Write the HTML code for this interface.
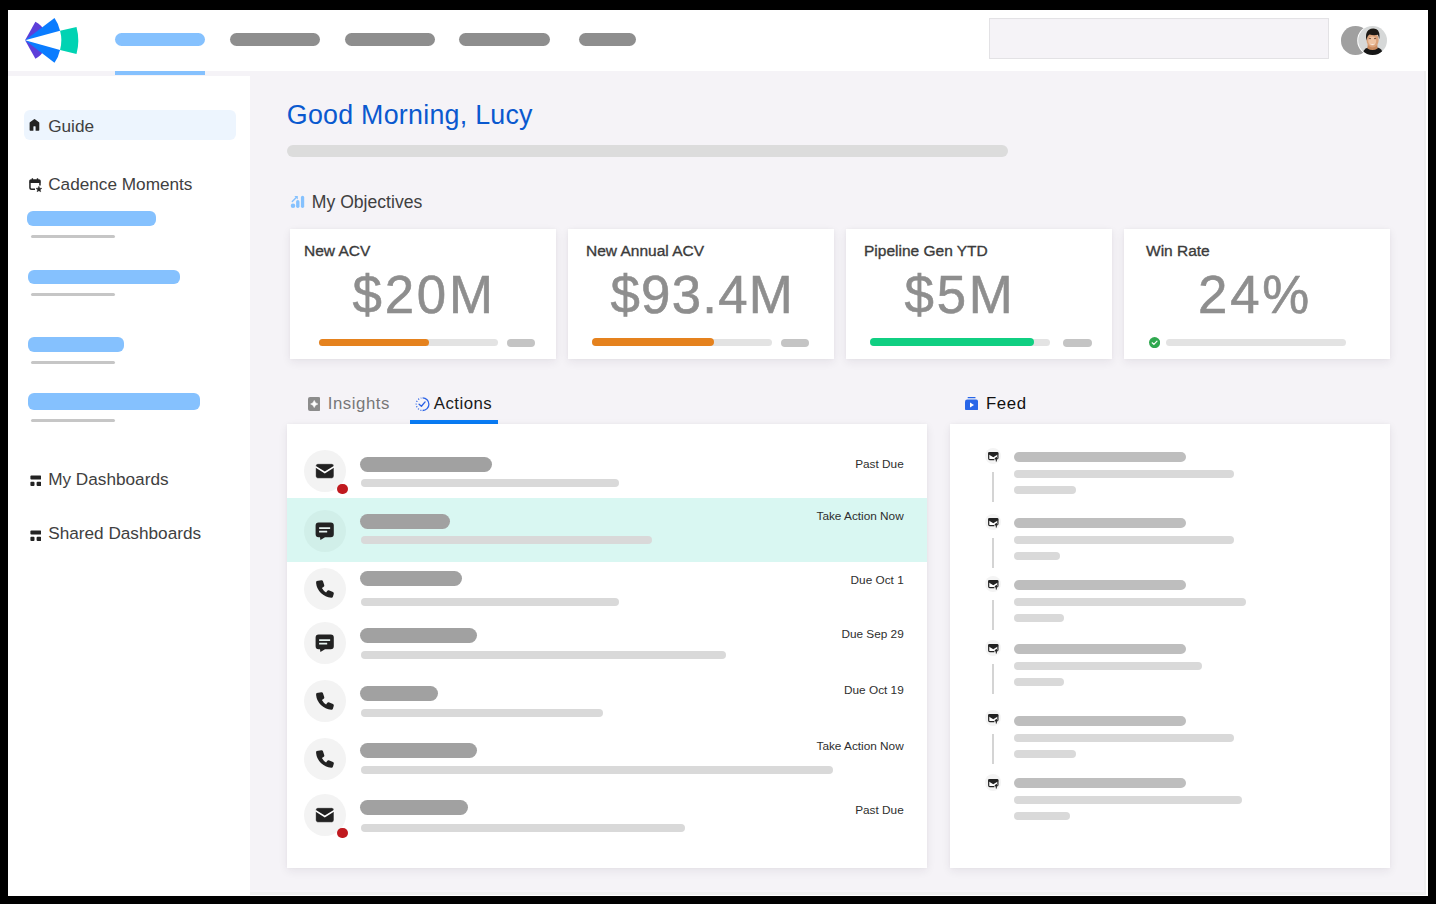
<!DOCTYPE html>
<html><head><meta charset="utf-8">
<style>
html,body{margin:0;padding:0}
body{width:1436px;height:904px;background:#000;position:relative;overflow:hidden;font-family:"Liberation Sans",sans-serif}
.a{position:absolute}
.t{position:absolute;line-height:1;white-space:nowrap;font-family:"Liberation Sans",sans-serif}
.pill{position:absolute;border-radius:8px}
.card{position:absolute;background:#fff;box-shadow:0 3px 9px rgba(40,30,60,0.075),0 0 3px rgba(40,30,60,0.03)}
.bl{background:#85c1fe}
.n{top:268.9px;font-size:52.8px;letter-spacing:2.8px;color:#8e8e8e;-webkit-text-stroke:0.6px #8e8e8e}
.ct{top:243px;font-size:15.5px;color:#3b3b3b;-webkit-text-stroke:0.35px #3b3b3b}
.gr{background:#8e8e8e}
.tb{position:absolute;background:#a1a1a1;height:15px;border-radius:7.5px;left:359.6px}
.sb{position:absolute;background:#d9d9d9;height:8px;border-radius:4px;left:361px}
.ic{position:absolute;left:303.9px;width:42px;height:42px;border-radius:50%;background:#f3f3f3}
.dt{position:absolute;right:532.3px;margin-top:0.5px;font-size:11.8px;color:#2e2e2e;line-height:1;white-space:nowrap;text-align:right}
.fi{position:absolute;left:984.5px;width:16.4px;height:16.4px;border-radius:50%;background:#f4f4f4}
.fl{position:absolute;left:992.3px;width:2px;background:#d4d4d4}
.f1{position:absolute;left:1014.2px;height:9.8px;width:171.6px;border-radius:5px;background:#bebebe}
.f2{position:absolute;left:1014.2px;height:8px;border-radius:4px;background:#d9d9d9}
.f3{position:absolute;left:1014.2px;height:7.8px;border-radius:4px;background:#d9d9d9}
</style></head>
<body>
<svg width="0" height="0" style="position:absolute">
<defs>
<g id="i-mail">
  <rect x="2.6" y="4.7" width="18.4" height="14.7" rx="2.3" fill="#222" stroke="#fff" stroke-width="0.6"/>
  <path d="M2.4 7.6 L11.8 13.4 L21.2 7.6" stroke="#fff" stroke-width="1.7" fill="none" stroke-linejoin="miter"/>
</g>
<g id="i-chat">
  <path d="M5.6 3.5 H17.8 Q20.8 3.5 20.8 6.5 V15.2 Q20.8 18.2 17.8 18.2 H12 L7.4 20.9 L7 18.2 H5.6 Q2.6 18.2 2.6 15.2 V6.5 Q2.6 3.5 5.6 3.5 Z" fill="#222"/>
  <rect x="6.1" y="8.2" width="11.1" height="1.7" rx="0.3" fill="#e8f4f1"/>
  <rect x="6.1" y="11.8" width="8.1" height="1.7" rx="0.3" fill="#e8f4f1"/>
</g>
<g id="i-phone">
  <path d="M3.7 4.1 L8.4 3.2 Q9.5 3.1 9.9 4.1 L11.3 8.3 Q11.5 9.4 10.4 10.1 L8.9 11.1 Q10.4 14 13.1 15.5 L14.1 14.1 Q14.8 13 15.7 13.2 L20 15.1 Q21 15.6 20.8 16.7 L19.9 19.8 Q19.5 20.8 18.3 20.7 Q12.2 20.1 7.9 15.9 Q3.6 11.7 3.1 6 Q3 4.4 3.7 4.1 Z" fill="#222"/>
</g>
<g id="i-fmail">
  <rect x="1.7" y="2.5" width="9.2" height="7.2" rx="1.1" fill="#fff" stroke="#222" stroke-width="1.2"/>
  <path d="M1.4 2.3 H11.2 V4.3 L6.3 7.3 L1.4 4.3 Z" fill="#222"/>
  <path d="M7.4 12 V8.7 L9.3 6.7 L11.9 8.9 V12 Z" fill="#f7f7f7"/>
  <path d="M9.3 11.6 V7.7 M7.9 9.2 L9.3 7.6 L10.7 9.2" stroke="#222" stroke-width="1.1" fill="none"/>
</g>
</defs></svg>
<!-- app frame -->
<div class="a" style="left:8px;top:10px;width:1420px;height:886px;background:#fff"></div>
<div class="a" style="left:8px;top:10px;width:1418.2px;height:884.9px;background:#efeff0"></div>
<div class="a" style="left:8px;top:10px;width:1415.8px;height:881.9px;background:#f5f3f7"></div>
<!-- header -->
<div class="a" style="left:8px;top:10px;width:1420px;height:61px;background:#fff"></div>
<svg class="a" style="left:0;top:0" width="100" height="80" viewBox="0 0 100 80">
  <path d="M25.08 40.3 L35.4 21.8 A21.2 21.2 0 0 1 44.5 31 Z" fill="#5d3fd9"/>
  <path d="M25.08 40.3 L44.5 49.6 A21.2 21.2 0 0 1 35.4 58.8 Z" fill="#5d3fd9"/>
  <path d="M25.08 40.3 L54.5 18.1 A36.6 36.6 0 0 1 60.05 30.7 Z" fill="#0a7cff"/>
  <path d="M25.08 40.3 L60.05 49.9 A36.6 36.6 0 0 1 54.5 62.8 Z" fill="#0a7cff"/>
  <path d="M60.05 30.8 L76.5 26.9 A53.1 53.1 0 0 1 76.5 54.1 L60.05 49.9 A36.3 36.3 0 0 0 60.05 30.8 Z" fill="#00d3b3"/>
</svg>
<div class="pill bl" style="left:115px;top:33.4px;width:90px;height:12.5px"></div>
<div class="pill gr" style="left:230px;top:33.4px;width:90px;height:12.5px"></div>
<div class="pill gr" style="left:344.5px;top:33.4px;width:90px;height:12.5px"></div>
<div class="pill gr" style="left:459.3px;top:33.4px;width:90.5px;height:12.5px"></div>
<div class="pill gr" style="left:578.5px;top:33.4px;width:57.5px;height:12.5px"></div>
<div class="a bl" style="left:115px;top:71px;width:90px;height:4.4px"></div>
<div class="a" style="left:989px;top:18.2px;width:338px;height:38.6px;background:#f5f3f7;border:1px solid #e3e2e5"></div>
<div class="a" style="left:1341.4px;top:26.2px;width:28.7px;height:28.7px;border-radius:50%;background:#a0a0a0"></div>
<svg class="a" style="left:1356.8px;top:25px" width="31" height="31" viewBox="0 0 31 31">
  <circle cx="15.5" cy="15.5" r="15.3" fill="#fff"/>
  <circle cx="15.6" cy="15.5" r="14.4" fill="#d6d8d8"/>
  <clipPath id="av"><circle cx="15.6" cy="15.5" r="14.4"/></clipPath>
  <g clip-path="url(#av)">
    <path d="M5.5 31 L6.5 26 Q8 23 11.5 22.6 L19.5 22.6 Q23.5 23 25 26 L26 31 Z" fill="#161616"/>
    <path d="M10.8 19 L20.2 19 L20.6 23.4 Q15.5 26.5 10.4 23.4 Z" fill="#c98a5e"/>
    <ellipse cx="15.6" cy="15" rx="6.1" ry="7.4" fill="#dba27a"/>
    <ellipse cx="15.2" cy="16" rx="4" ry="4.6" fill="#eec3a2"/>
    <path d="M9.3 15.5 Q8 7.8 11.5 5 Q15.5 2.6 19.5 4.2 Q23.2 6 22.3 14.2 Q21.6 10.5 20.8 9.8 Q17 10.8 12.6 9.6 Q10.4 10.8 9.3 15.5 Z" fill="#1d1915"/>
    <path d="M12.6 18.6 Q15.4 21.2 18.4 18.6 Q15.5 19.6 12.6 18.6 Z" fill="#fbeee6"/>
    <path d="M11.9 13.6 H14 M17 13.6 H19.1" stroke="#5a3a28" stroke-width="0.8"/>
  </g>
</svg>

<!-- sidebar -->
<div class="a" style="left:8px;top:76px;width:242px;height:820px;background:#fff"></div>
<div class="a" style="left:24.2px;top:110px;width:211.6px;height:29.6px;border-radius:6px;background:#edf5fe"></div>
<svg class="a" style="left:28.9px;top:119px" width="12" height="12.2" viewBox="0 0 12 12.2">
  <path d="M5.5 0.1 Q5.9 0.1 6.3 0.5 L10 3.3 Q10.3 3.6 10.3 4.1 L10.3 11.1 Q10.3 11.8 9.6 11.8 L6.6 11.8 L6.6 7.8 Q6.6 7.3 6.1 7.3 L4.9 7.3 Q4.4 7.3 4.4 7.8 L4.4 11.8 L1.3 11.8 Q0.6 11.8 0.6 11.1 L0.6 4.1 Q0.6 3.6 0.9 3.3 L4.7 0.5 Q5.1 0.1 5.5 0.1 Z" fill="#232323"/>
</svg>
<div class="t" style="left:48.2px;top:117.8px;font-size:17.2px;color:#404040">Guide</div>
<svg class="a" style="left:29px;top:178px" width="15" height="15" viewBox="0 0 15 15">
  <path d="M3.4 0.2 V2.6 M8.5 0.2 V2.6" stroke="#232323" stroke-width="1.4"/>
  <path d="M6 11.15 H2.7 Q0.95 11.15 0.95 9.4 V3.9 Q0.95 2.25 2.7 2.25 H9.2 Q10.95 2.25 10.95 3.9 V7.6" stroke="#232323" stroke-width="1.5" fill="none"/>
  <rect x="0.5" y="1.6" width="11" height="3.5" rx="1" fill="#232323"/>
  <path d="M9.90 8.25 L10.69 10.21 L12.80 10.36 L11.18 11.72 L11.69 13.77 L9.90 12.65 L8.11 13.77 L8.62 11.72 L7.00 10.36 L9.11 10.21 Z" fill="#232323" stroke="#232323" stroke-width="0.5" stroke-linejoin="round"/>
</svg>
<div class="t" style="left:48.2px;top:176.3px;font-size:17.2px;color:#404040">Cadence Moments</div>
<div class="pill bl" style="left:27.3px;top:211.3px;width:128.9px;height:14.7px;border-radius:6px"></div>
<div class="a" style="left:30.5px;top:234.8px;width:84.7px;height:3px;border-radius:1.5px;background:#c6c6c6"></div>
<div class="pill bl" style="left:27.5px;top:269.9px;width:152.2px;height:14.6px;border-radius:6px"></div>
<div class="a" style="left:30.5px;top:293.2px;width:84.7px;height:3px;border-radius:1.5px;background:#c6c6c6"></div>
<div class="pill bl" style="left:27.5px;top:337px;width:96.5px;height:15px;border-radius:6px"></div>
<div class="a" style="left:30.5px;top:360.6px;width:84.7px;height:3px;border-radius:1.5px;background:#c6c6c6"></div>
<div class="pill bl" style="left:27.5px;top:392.8px;width:172.7px;height:17.2px;border-radius:6px"></div>
<div class="a" style="left:30.5px;top:419px;width:84.7px;height:3px;border-radius:1.5px;background:#c6c6c6"></div>
<svg class="a" style="left:29.7px;top:475.3px" width="11.4" height="11.4" viewBox="0 0 11.4 11.4">
  <rect x="0.4" y="0.4" width="10.8" height="4.1" rx="1" fill="#232323"/>
  <rect x="0.4" y="6.8" width="4.1" height="4.2" rx="1" fill="#232323"/>
  <rect x="6.6" y="6.8" width="4.6" height="4.2" rx="1" fill="#232323"/>
</svg>
<div class="t" style="left:48.2px;top:471.3px;font-size:17.2px;color:#404040">My Dashboards</div>
<svg class="a" style="left:29.7px;top:529.5px" width="11.4" height="11.4" viewBox="0 0 11.4 11.4">
  <rect x="0.4" y="0.4" width="10.8" height="4.1" rx="1" fill="#232323"/>
  <rect x="0.4" y="6.8" width="4.1" height="4.2" rx="1" fill="#232323"/>
  <rect x="6.6" y="6.8" width="4.6" height="4.2" rx="1" fill="#232323"/>
</svg>
<div class="t" style="left:48.2px;top:525px;font-size:17.2px;color:#404040">Shared Dashboards</div>

<!-- main greeting -->
<div class="t" style="left:286.8px;top:101.8px;font-size:26.8px;letter-spacing:0.26px;color:#0a59cf">Good Morning, Lucy</div>
<div class="a" style="left:286.7px;top:144.7px;width:721.8px;height:12.6px;border-radius:6.3px;background:#dcdcdc"></div>

<!-- objectives -->
<svg class="a" style="left:290px;top:195px" width="16" height="14" viewBox="0 0 16 14">
  <circle cx="3" cy="10.7" r="2.25" fill="#85c1fe"/>
  <rect x="6.1" y="5" width="3.4" height="8" rx="1.7" fill="#85c1fe"/>
  <rect x="10.9" y="0.8" width="3.3" height="12.2" rx="1.65" fill="#85c1fe"/>
  <path d="M2.3 6.5 L6.3 2.6" stroke="#85c1fe" stroke-width="1.4" stroke-linecap="round"/>
  <path d="M4.3 1 L7.8 1 L7.8 4.5 Z" fill="#85c1fe"/>
</svg>
<div class="t" style="left:311.8px;top:193.8px;font-size:17.6px;color:#404040">My Objectives</div>

<div class="card" style="left:290px;top:228.8px;width:266.2px;height:130.7px"></div>
<div class="card" style="left:568px;top:228.8px;width:266.1px;height:130.7px"></div>
<div class="card" style="left:846.3px;top:228.8px;width:265.7px;height:130.7px"></div>
<div class="card" style="left:1124.2px;top:228.8px;width:265.8px;height:130.7px"></div>

<div class="t ct" style="left:304px">New ACV</div>
<div class="t ct" style="left:586px">New Annual ACV</div>
<div class="t ct" style="left:864px">Pipeline Gen YTD</div>
<div class="t ct" style="left:1146px">Win Rate</div>

<div class="t n" style="left:352.5px">$20M</div>
<div class="t n" style="left:610.5px;letter-spacing:1.25px">$93.4M</div>
<div class="t n" style="left:904.5px">$5M</div>
<div class="t n" style="left:1198px">24%</div>

<div class="a" style="left:318.9px;top:339px;width:179.6px;height:7px;border-radius:3.5px;background:#e3e3e3"></div>
<div class="a" style="left:318.9px;top:339px;width:109.8px;height:7px;border-radius:3.5px;background:#e5821e"></div>
<div class="a" style="left:507px;top:339px;width:28.3px;height:7.8px;border-radius:3.9px;background:#c4c4c4"></div>

<div class="a" style="left:592px;top:339px;width:180.2px;height:7px;border-radius:3.5px;background:#e3e3e3"></div>
<div class="a" style="left:592px;top:338.2px;width:122.2px;height:7.8px;border-radius:3.9px;background:#e5821e"></div>
<div class="a" style="left:780.8px;top:339px;width:28.2px;height:7.8px;border-radius:3.9px;background:#c4c4c4"></div>

<div class="a" style="left:870.3px;top:339px;width:179.7px;height:7px;border-radius:3.5px;background:#e3e3e3"></div>
<div class="a" style="left:870.3px;top:338.2px;width:163.6px;height:7.8px;border-radius:3.9px;background:#10cf82"></div>
<div class="a" style="left:1063.1px;top:339px;width:28.6px;height:7.8px;border-radius:3.9px;background:#c4c4c4"></div>

<svg class="a" style="left:1148.9px;top:336.6px" width="11.2" height="11.2" viewBox="0 0 11.2 11.2">
  <circle cx="5.6" cy="5.6" r="5.6" fill="#2fa84f"/>
  <path d="M3.2 5.8 L4.9 7.4 L8 4.1" stroke="#fff" stroke-width="1.2" fill="none" stroke-linecap="round" stroke-linejoin="round"/>
</svg>
<div class="a" style="left:1166px;top:339px;width:180px;height:7px;border-radius:3.5px;background:#e3e3e3"></div>

<!-- tabs -->
<svg class="a" style="left:307.8px;top:397px" width="12.5" height="14" viewBox="0 0 12.5 14">
  <rect x="0" y="0" width="12.5" height="14" rx="2" fill="#8c8c8c"/>
  <path d="M6.25 3.4 Q7 6.2 9.9 7 Q7 7.8 6.25 10.6 Q5.5 7.8 2.6 7 Q5.5 6.2 6.25 3.4 Z" fill="#fff" stroke="#fff" stroke-width="0.5" stroke-linejoin="round"/>
</svg>
<div class="t" style="left:327.8px;top:396.1px;font-size:16.8px;letter-spacing:0.53px;color:#777">Insights</div>
<svg class="a" style="left:414.5px;top:396.5px" width="15" height="15" viewBox="0 0 15 15">
  <path d="M7.6 0.9 A6.3 6.3 0 0 1 7.6 13.5" stroke="#2a62e6" stroke-width="1.3" fill="none"/>
  <path d="M6.4 13.4 A6.3 6.3 0 0 1 6.4 1" stroke="#2a62e6" stroke-width="1.25" fill="none" stroke-dasharray="1 1.75"/>
  <path d="M4.1 7.3 L6.4 9.3 L10.1 4.9" stroke="#2a62e6" stroke-width="1.35" fill="none" stroke-linecap="round" stroke-linejoin="round"/>
</svg>
<div class="t" style="left:433.8px;top:396.1px;font-size:16.8px;letter-spacing:0.47px;color:#1a1a1a">Actions</div>
<div class="a" style="left:410px;top:419.7px;width:88px;height:4.2px;background:#0a7cf5"></div>

<svg class="a" style="left:965px;top:396.6px" width="13.2" height="13.6" viewBox="0 0 13.2 13.6">
  <rect x="2.6" y="0" width="8" height="1.3" rx="0.6" fill="#2866e8"/>
  <rect x="0" y="2.6" width="13.2" height="11" rx="2.2" fill="#2866e8"/>
  <path d="M5 5.6 L9 8.1 L5 10.6 Z" fill="#fff"/>
</svg>
<div class="t" style="left:986px;top:395.8px;font-size:16.8px;letter-spacing:0.6px;color:#111">Feed</div>

<!-- actions card -->
<div class="card" style="left:287.2px;top:423.9px;width:640.1px;height:443.8px"></div>
<div class="a" style="left:287.2px;top:498px;width:640.1px;height:63.9px;background:#d9f7f2"></div>
<div class="ic" style="top:450.0px"></div>
<svg class="a" style="left:312.9px;top:459.0px" width="24" height="24" viewBox="0 0 24 24"><use href="#i-mail"/></svg>
<div class="a" style="left:337.3px;top:483.8px;width:10.5px;height:10.5px;border-radius:50%;background:#c0191f"></div>
<div class="tb" style="top:456.8px;width:132.3px"></div>
<div class="sb" style="top:478.7px;width:258.2px"></div>
<div class="dt" style="top:458.5px">Past Due</div>
<div class="ic" style="top:509.9px;background:#d1efe9"></div>
<svg class="a" style="left:312.9px;top:518.9px" width="24" height="24" viewBox="0 0 24 24"><use href="#i-chat"/></svg>
<div class="tb" style="top:513.6px;width:90.3px"></div>
<div class="sb" style="top:536.1px;width:291.3px"></div>
<div class="dt" style="top:510.3px">Take Action Now</div>
<div class="ic" style="top:568.0px"></div>
<svg class="a" style="left:312.9px;top:577.0px" width="24" height="24" viewBox="0 0 24 24"><use href="#i-phone"/></svg>
<div class="tb" style="top:571.1px;width:102.2px"></div>
<div class="sb" style="top:597.6px;width:258.2px"></div>
<div class="dt" style="top:574.0px">Due Oct 1</div>
<div class="ic" style="top:622.3px"></div>
<svg class="a" style="left:312.9px;top:631.3px" width="24" height="24" viewBox="0 0 24 24"><use href="#i-chat"/></svg>
<div class="tb" style="top:628.3px;width:117.2px"></div>
<div class="sb" style="top:651.3px;width:365.1px"></div>
<div class="dt" style="top:628.4px">Due Sep 29</div>
<div class="ic" style="top:680.0px"></div>
<svg class="a" style="left:312.9px;top:689.0px" width="24" height="24" viewBox="0 0 24 24"><use href="#i-phone"/></svg>
<div class="tb" style="top:685.7px;width:78.4px"></div>
<div class="sb" style="top:708.7px;width:242.1px"></div>
<div class="dt" style="top:684.2px">Due Oct 19</div>
<div class="ic" style="top:738.0px"></div>
<svg class="a" style="left:312.9px;top:747.0px" width="24" height="24" viewBox="0 0 24 24"><use href="#i-phone"/></svg>
<div class="tb" style="top:742.8px;width:117.2px"></div>
<div class="sb" style="top:766.1px;width:471.5px"></div>
<div class="dt" style="top:740.2px">Take Action Now</div>
<div class="ic" style="top:794.0px"></div>
<svg class="a" style="left:312.9px;top:803.0px" width="24" height="24" viewBox="0 0 24 24"><use href="#i-mail"/></svg>
<div class="a" style="left:337.3px;top:827.8px;width:10.5px;height:10.5px;border-radius:50%;background:#c0191f"></div>
<div class="tb" style="top:800.2px;width:108.0px"></div>
<div class="sb" style="top:823.5px;width:323.7px"></div>
<div class="dt" style="top:804.0px">Past Due</div>

<!-- feed card -->
<div class="card" style="left:949.8px;top:423.8px;width:440.2px;height:443.9px"></div>
<div class="fi" style="top:447.8px"></div>
<svg class="a" style="left:986.8px;top:450.0px" width="12" height="12" viewBox="0 0 12 12"><use href="#i-fmail"/></svg>
<div class="fl" style="top:471.8px;height:30.5px"></div>
<div class="f1" style="top:452.1px"></div>
<div class="f2" style="top:469.9px;width:219.8px"></div>
<div class="f3" style="top:486.0px;width:61.6px"></div>
<div class="fi" style="top:513.8px"></div>
<svg class="a" style="left:986.8px;top:516.0px" width="12" height="12" viewBox="0 0 12 12"><use href="#i-fmail"/></svg>
<div class="fl" style="top:538.0px;height:30.0px"></div>
<div class="f1" style="top:518.0px"></div>
<div class="f2" style="top:536.0px;width:219.8px"></div>
<div class="f3" style="top:551.9px;width:45.8px"></div>
<div class="fi" style="top:575.8px"></div>
<svg class="a" style="left:986.8px;top:578.0px" width="12" height="12" viewBox="0 0 12 12"><use href="#i-fmail"/></svg>
<div class="fl" style="top:600.1px;height:29.7px"></div>
<div class="f1" style="top:579.9px"></div>
<div class="f2" style="top:597.9px;width:231.7px"></div>
<div class="f3" style="top:614.0px;width:49.9px"></div>
<div class="fi" style="top:639.8px"></div>
<svg class="a" style="left:986.8px;top:642.0px" width="12" height="12" viewBox="0 0 12 12"><use href="#i-fmail"/></svg>
<div class="fl" style="top:664.0px;height:30.0px"></div>
<div class="f1" style="top:644.1px"></div>
<div class="f2" style="top:661.9px;width:187.7px"></div>
<div class="f3" style="top:678.0px;width:49.9px"></div>
<div class="fi" style="top:709.8px"></div>
<svg class="a" style="left:986.8px;top:712.0px" width="12" height="12" viewBox="0 0 12 12"><use href="#i-fmail"/></svg>
<div class="fl" style="top:734.2px;height:29.7px"></div>
<div class="f1" style="top:715.9px"></div>
<div class="f2" style="top:734.2px;width:219.8px"></div>
<div class="f3" style="top:750.0px;width:61.6px"></div>
<div class="fi" style="top:774.3px"></div>
<svg class="a" style="left:986.8px;top:776.5px" width="12" height="12" viewBox="0 0 12 12"><use href="#i-fmail"/></svg>
<div class="f1" style="top:778.0px"></div>
<div class="f2" style="top:796.2px;width:227.8px"></div>
<div class="f3" style="top:812.0px;width:55.8px"></div>

</body></html>
